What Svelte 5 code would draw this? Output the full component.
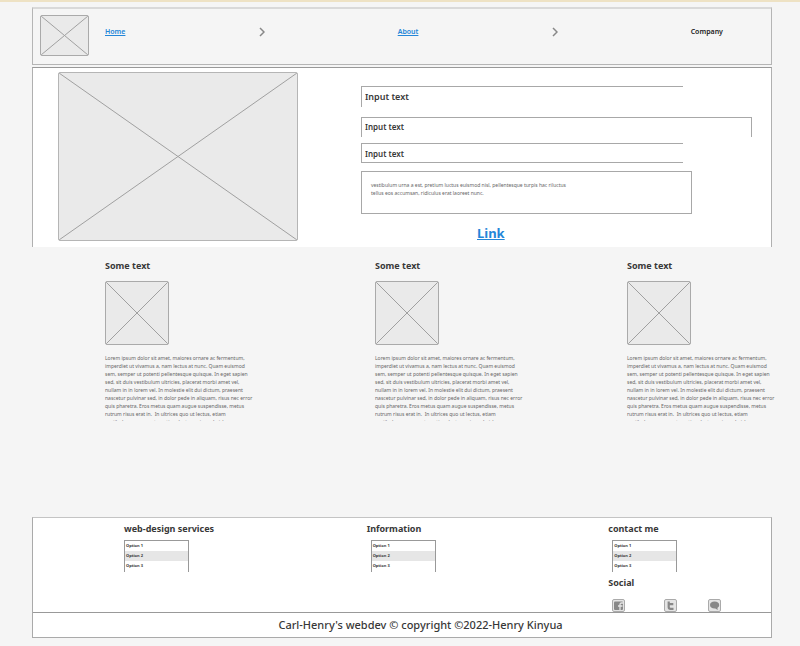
<script>
  const fields = [
    { id: 'name', label: 'Name', kind: 'large' },
    { id: 'email', label: 'Email', kind: 'wide' },
    { id: 'subject', label: 'Subject', kind: 'closed' }
  ];

  const message =
    'vestibulum urna a est, pretium luctus euismod nisl, pellentesque turpis hac riluctus\ntellus eos accumsan, ridiculus erat laoreet nunc.';

  const lorem = [
    'Lorem ipsum dolor sit amet, maiores ornare ac fermentum,',
    'imperdiet ut vivamus a, nam lectus at nunc. Quam euismod',
    'sem, semper ut potenti pellentesque quisque. In eget sapien',
    'sed, sit duis vestibulum ultricies, placerat morbi amet vel,',
    'nullam in in lorem vel. In molestie elit dui dictum, praesent',
    'nascetur pulvinar sed, in dolor pede in aliquam, risus nec error',
    'quis pharetra. Eros metus quam augue suspendisse, metus',
    'rutrum risus erat in.  In ultrices quo ut lectus, etiam',
    'vestibulum urna a est, pretium luctus euismod nisl'
  ].join('\n');

  const cards = [1, 2, 3];
  const columns = ['web-design services', 'Information', 'contact me'];
  const options = ['Option 1', 'Option 2', 'Option 3'];
</script>

{#snippet placeholder(kind)}
  <svg class="placeholder {kind}" preserveAspectRatio="none" viewBox="0 0 100 100" aria-hidden="true">
    <path d="M0 0L100 100M100 0L0 100" vector-effect="non-scaling-stroke" />
  </svg>
{/snippet}

{#snippet chevron()}
  <svg class="chevron" viewBox="0 0 6 10" aria-hidden="true"><path d="M1 1L5 5L1 9" /></svg>
{/snippet}

<div class="page">
  <header>
    {@render placeholder('logo')}
    <nav>
      <a href="#home">Home</a>
      {@render chevron()}
      <a href="#about">About</a>
      {@render chevron()}
      <span>Company</span>
    </nav>
  </header>

  <section class="hero">
    {@render placeholder('banner')}
    <form>
      {#each fields as field}
        <input class={field.kind} id={field.id} aria-label={field.label} type="text" value="Input text" />
      {/each}
      <textarea aria-label="Message" value={message}></textarea>
      <a href="#link">Link</a>
    </form>
  </section>

  <section class="cards">
    {#each cards as card (card)}
      <article>
        <h2>Some text</h2>
        {@render placeholder('thumb')}
        <p>{lorem}</p>
      </article>
    {/each}
  </section>

  <footer>
    <div class="columns">
      {#each columns as title, i}
        <div class="column">
          <h2 id="title-{i}">{title}</h2>
          <select class:inset={i > 0} size="3" aria-labelledby="title-{i}">
            {#each options as option, n}
              <option selected={n === 1}>{option}</option>
            {/each}
          </select>
          {#if i === 2}
            <h2 class="social-title">Social</h2>
            <div class="social">
              <a href="#facebook" aria-label="Facebook">
                <svg viewBox="0 0 13 13"><rect class="tile" x=".5" y=".5" width="12" height="12" rx="1.5" /><rect class="ink" x="2" y="2.5" width="9" height="8.5" rx="1" /><path class="cut" d="M11 4H9.5Q8 4 8 5.500V11M6 7H10.500" /></svg>
              </a>
              <a href="#twitter" aria-label="Twitter">
                <svg viewBox="0 0 13 13"><rect class="tile" x=".5" y=".5" width="12" height="12" rx="1.5" /><path class="stroke" d="M4.700 2.500V8Q4.700 9.800 6.500 9.800H9.500M4.700 5.200H9.300" /></svg>
              </a>
              <a href="#chat" aria-label="Chat">
                <svg viewBox="0 0 13 13"><rect class="tile" x=".5" y=".5" width="12" height="12" rx="1.5" /><path class="ink" d="M6.500 2.500C9.500 2.500 11.200 4 11.200 6C11.200 7.300 10.500 8.300 9.400 8.900L9.800 11L7.300 9.500C4 9.700 2 8.200 2 6C2 4 3.800 2.500 6.500 2.500Z" /></svg>
              </a>
            </div>
          {/if}
        </div>
      {/each}
    </div>
    <p class="copyright">Carl-Henry's webdev © copyright ©2022-Henry Kinyua</p>
  </footer>
</div>

<style>
  :global(body) {
    margin: 0;
    background: #f5f5f5;
  }

  .page {
    box-sizing: border-box;
    padding: 5px 28px 8px 32px;
    border-top: 2px solid #eee2c4;
    font-family: 'Noto Sans', 'Open Sans', sans-serif;
    color: #383838;
  }

  .page :is(header, section, footer, input, textarea, select) {
    box-sizing: border-box;
  }

  h2,
  p {
    margin: 0;
  }

  h2 {
    font-size: 9px;
    line-height: 12px;
    font-weight: 700;
  }

  a {
    color: #2386d8;
  }

  .placeholder {
    display: block;
    box-sizing: border-box;
    background: #eaeaea;
    border: 1px solid #aaa;
    border-radius: 2px;
  }

  .placeholder path {
    fill: none;
    stroke: #a0a0a0;
    stroke-width: 1;
  }

  header {
    display: flex;
    align-items: flex-start;
    height: 58px;
    padding: 6px 48px 0 7px;
    border: 1px solid #b5b5b5;
    border-top: 2px solid #d9d9d9;
  }

  .logo {
    width: 49px;
    height: 41px;
  }

  nav {
    flex: 1;
    display: flex;
    align-items: center;
    justify-content: space-between;
    margin: 10px 0 0 16px;
    font-size: 7px;
    line-height: 14px;
    font-weight: 600;
  }

  nav span {
    color: #222;
  }

  .chevron {
    width: 6px;
    height: 10px;
  }

  .chevron path {
    fill: none;
    stroke: #888;
    stroke-width: 1.5;
  }

  .hero {
    display: flex;
    justify-content: space-between;
    height: 180px;
    margin-top: 2px;
    padding: 4px 19px 0 25px;
    background: #fff;
    border: 1px solid #b0b0b0;
    border-top-color: #999;
    border-bottom: 0;
  }

  .banner {
    width: 240px;
    height: 169px;
    border-color: #b5b5b5;
  }

  form {
    display: flex;
    flex-direction: column;
    width: 391px;
    padding-top: 14px;
  }

  input,
  textarea {
    font-family: inherit;
    color: #383838;
    background: #fff;
    border: 1px solid #a8a8a8;
    border-radius: 0;
    outline: 0;
    margin: 0;
  }

  input {
    width: 322px;
    height: 20px;
    padding: 0 3px;
    font-size: 8px;
    font-weight: 600;
    border-right: 0;
  }

  .large {
    height: 21px;
    padding-bottom: 2px;
    font-size: 9px;
    border-bottom: 0;
  }

  .wide {
    width: 100%;
    margin: 10px 0 6px;
    padding-bottom: 2px;
    border-right: 1px solid #a8a8a8;
    border-bottom: 0;
  }

  textarea {
    width: 331px;
    height: 43px;
    margin-top: 8px;
    padding: 9px;
    font-size: 5px;
    line-height: 8px;
    color: #666;
    resize: none;
    overflow: hidden;
    white-space: pre;
  }

  form a {
    align-self: flex-start;
    margin: 10px 0 0 116px;
    font-size: 13px;
    line-height: 18px;
    font-weight: 700;
  }

  .cards {
    display: grid;
    grid-template-columns: minmax(0, 270fr) minmax(0, 252fr) minmax(0, 145fr);
    padding: 13px 0 0 73px;
  }

  .thumb {
    width: 64px;
    height: 64px;
    margin: 9px 0;
  }

  article p {
    height: 67px;
    overflow-x: visible;
    overflow-y: clip;
    font-size: 5px;
    line-height: 8px;
    color: #666;
    white-space: pre;
  }

  footer {
    margin-top: 96px;
    background: #fff;
    border: 1px solid #aaa;
    border-top-color: #c4c4c4;
  }

  .columns {
    display: grid;
    grid-template-columns: 243fr 242fr 163fr;
    padding: 5px 0 0 91px;
    border-bottom: 1px solid #999;
  }

  select {
    display: block;
    width: 65px;
    height: 32px;
    margin-top: 5px;
    padding: 0;
    overflow: hidden;
    appearance: none;
    background: #fff;
    border: 1px solid #999;
    border-bottom: 0;
    border-radius: 0;
    outline: 0;
    font-family: inherit;
    font-size: 4px;
    font-weight: 700;
    color: #383838;
    scrollbar-width: none;
  }

  .inset {
    margin-left: 4px;
  }

  option {
    box-sizing: border-box;
    height: 10px;
    min-height: 0;
    padding: 2px 1px 0;
    line-height: 8px;
    font-weight: 700;
    color: #383838;
  }

  option:checked {
    background: #e6e6e6 linear-gradient(#e6e6e6, #e6e6e6);
  }

  .social-title {
    margin-top: 5px;
  }

  .social {
    display: flex;
    gap: 31px;
    margin: 10px 0 0 4px;
  }

  .social a:first-child {
    margin-right: 8px;
  }

  .social a,
  .social svg {
    display: block;
    width: 13px;
    height: 13px;
  }

  .tile {
    fill: #e4e4e4;
    stroke: #aaa;
  }

  .ink {
    fill: #888;
  }

  .cut {
    fill: none;
    stroke: #e4e4e4;
    stroke-width: 1.3;
  }

  .stroke {
    fill: none;
    stroke: #888;
    stroke-width: 2.2;
  }

  .copyright {
    font-size: 11px;
    line-height: 24px;
    font-weight: 500;
    text-align: center;
    padding-left: 37px;
  }
</style>
